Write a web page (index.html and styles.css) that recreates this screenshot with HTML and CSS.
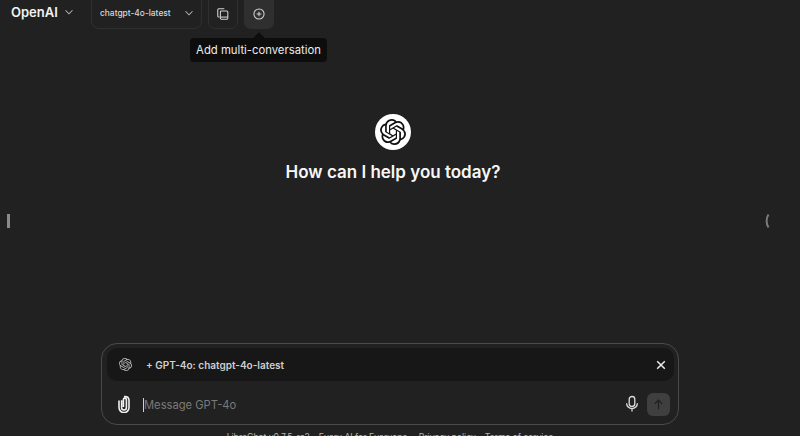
FILE: index.html
```html
<!DOCTYPE html>
<html lang="en">
<head>
<meta charset="utf-8">
<title>LibreChat</title>
<link rel="stylesheet" href="styles.css">
</head>
<body>
<svg class="defs" width="0" height="0" aria-hidden="true">
  <symbol id="openai" viewBox="0 0 24 24"><path fill="currentColor" d="M22.2819 9.8211a5.9847 5.9847 0 0 0-.5157-4.9108 6.0462 6.0462 0 0 0-6.5098-2.9A6.0651 6.0651 0 0 0 4.9807 4.1818a5.9847 5.9847 0 0 0-3.9977 2.9 6.0462 6.0462 0 0 0 .7427 7.0966 5.98 5.98 0 0 0 .511 4.9107 6.051 6.051 0 0 0 6.5146 2.9001A5.9847 5.9847 0 0 0 13.2599 24a6.0557 6.0557 0 0 0 5.7718-4.2058 5.9894 5.9894 0 0 0 3.9977-2.9001 6.0557 6.0557 0 0 0-.7475-7.0729zm-9.022 12.6081a4.4755 4.4755 0 0 1-2.8764-1.0408l.1419-.0804 4.7783-2.7582a.7948.7948 0 0 0 .3927-.6813v-6.7369l2.02 1.1686a.071.071 0 0 1 .038.052v5.5826a4.504 4.504 0 0 1-4.4945 4.4944zm-9.6607-4.1254a4.4708 4.4708 0 0 1-.5346-3.0137l.142.0852 4.783 2.7582a.7712.7712 0 0 0 .7806 0l5.8428-3.3685v2.3324a.0804.0804 0 0 1-.0332.0615L9.74 19.9502a4.4992 4.4992 0 0 1-6.1408-1.6464zM2.3408 7.8956a4.485 4.485 0 0 1 2.3655-1.9728V11.6a.7664.7664 0 0 0 .3879.6765l5.8144 3.3543-2.0201 1.1685a.0757.0757 0 0 1-.071 0l-4.8303-2.7865A4.504 4.504 0 0 1 2.3408 7.872zm16.5963 3.8558L13.1038 8.364 15.1192 7.2a.0757.0757 0 0 1 .071 0l4.8303 2.7913a4.4944 4.4944 0 0 1-.6765 8.1042v-5.6772a.79.79 0 0 0-.407-.667zm2.0107-3.0231l-.142-.0852-4.7735-2.7818a.7759.7759 0 0 0-.7854 0L9.409 9.2297V6.8974a.0662.0662 0 0 1 .0284-.0615l4.8303-2.7866a4.4992 4.4992 0 0 1 6.6802 4.66zM8.3065 12.863l-2.02-1.1638a.0804.0804 0 0 1-.038-.0567V6.0742a4.4992 4.4992 0 0 1 7.3757-3.4537l-.142.0805L8.704 5.459a.7948.7948 0 0 0-.3927.6813zm1.0976-2.3654l2.602-1.4998 2.6069 1.4998v2.9994l-2.5974 1.4997-2.6067-1.4997Z"/></symbol>
</svg>

<header class="topbar">
  <div class="brand">
    <span>OpenAI</span>
    <svg class="chev" viewBox="0 0 16 16"><path d="M4 6l4 4 4-4"/></svg>
  </div>
  <div class="model-select">
    <span>chatgpt-4o-latest</span>
    <svg class="chev" viewBox="0 0 16 16"><path d="M4 6l4 4 4-4"/></svg>
  </div>
  <button class="icon-btn outlined" aria-label="Bookmarks">
    <svg viewBox="0 0 16 16" class="icon14"><path d="M4 11.5H3.2A1.2 1.2 0 0 1 2 10.3V3.2A1.2 1.2 0 0 1 3.2 2H9.5"/><rect x="5" y="4.5" width="8.5" height="9.5" rx="1.2"/><path d="M5 11.5h8.5"/></svg>
  </button>
  <button class="icon-btn filled" aria-label="Add multi-conversation">
    <svg viewBox="0 0 16 16" class="icon14"><circle cx="8" cy="8" r="5.8"/><path d="M8 5.3v5.4M5.3 8h5.4"/></svg>
    <span class="tooltip">Add multi-conversation</span>
  </button>
</header>

<main class="hero">
  <div class="logo"><svg class="logo-mark"><use href="#openai"/></svg></div>
  <h1>How can I help you today?</h1>
</main>

<section class="composer">
  <div class="added-model">
    <div class="added-label">
      <svg class="added-mark"><use href="#openai"/></svg>
      <span>+ GPT-4o: chatgpt-4o-latest</span>
    </div>
    <svg class="close" viewBox="0 0 12 12"><path d="M2.2 2.2l7.6 7.6M9.8 2.2l-7.6 7.6"/></svg>
  </div>
  <div class="input-row">
    <svg class="clip" viewBox="0 0 18 18"><path d="M6.6 5.2v7.4a2.4 2.4 0 0 0 4.8 0V4.6a1.5 1.5 0 0 0-3 0v7.4M4 5.6v7a5 5 0 0 0 10 0V5.2a4 4 0 0 0-4-3.7H9"/></svg>
    <div class="placeholder"><i class="caret"></i>Message GPT-4o</div>
    <svg class="mic" viewBox="0 0 18 18"><rect x="6.2" y="1.5" width="5.6" height="10" rx="2.8"/><path d="M3.6 8.2a5.4 5.4 0 0 0 10.8 0M9 13.6v3"/></svg>
    <button class="send" aria-label="Send"><svg viewBox="0 0 14 14"><path d="M7 12V2.5M3 6.3l4-4 4 4"/></svg></button>
  </div>
</section>

<footer class="legal">LibreChat v0.7.5-rc2 - Every AI for Everyone. - Privacy policy - Terms of service</footer>

<i class="handle-left"></i>
<svg class="handle-right" viewBox="0 0 6 16"><path d="M4.5 1.5C2 5 2 11 4.5 14.5"/></svg>
</body>
</html>
```

FILE: styles.css
```css
* { box-sizing: border-box; }

html, body { height: 100%; }

body {
  margin: 0;
  position: relative;
  display: flex;
  flex-direction: column;
  overflow: hidden;
  background: #212121;
  color: #ececec;
  font-family: Inter, "Liberation Sans", sans-serif;
}

.defs { position: absolute; }

.topbar {
  display: flex;
  align-items: center;
  flex: none;
  height: 36px;
  margin-top: -7px;
  padding-left: 11px;
}

.brand {
  display: flex;
  align-items: center;
  gap: 4px;
  width: 80px;
  padding-top: 2px;
  font-size: 13px;
  font-weight: 600;
  color: #f2f2f2;
}

.chev {
  width: 14px;
  height: 14px;
  fill: none;
  stroke: #b4b4b4;
  stroke-width: 1.2;
}

.model-select {
  display: flex;
  align-items: center;
  justify-content: space-between;
  width: 111px;
  height: 36px;
  padding: 3px 5px 0 8px;
  margin-right: 6px;
  border: 1px solid #2f2f2f;
  border-radius: 8px;
  font-size: 8.4px;
  font-weight: 500;
  color: #d8d8d8;
}

.icon-btn {
  position: relative;
  display: flex;
  align-items: center;
  justify-content: center;
  width: 30px;
  height: 36px;
  padding: 6px 0 0;
  border: 1px solid transparent;
  border-radius: 7px;
  background: none;
  color: #d4d4d4;
  font-family: inherit;
}

.outlined {
  border-color: #2f2f2f;
  margin-right: 6px;
}

.filled { background: #2f2f2f; }

.icon14 {
  width: 14px;
  height: 14px;
  fill: none;
  stroke: currentColor;
  stroke-width: 1.2;
}

.tooltip {
  position: absolute;
  top: 44px;
  left: -55px;
  width: 137px;
  height: 24px;
  border-radius: 4px;
  background: #0d0d0d;
  color: #ececec;
  font-size: 11.3px;
  line-height: 24px;
  text-align: center;
  white-space: nowrap;
}

.tooltip::before {
  content: "";
  position: absolute;
  top: -4px;
  left: 65px;
  width: 8px;
  height: 8px;
  background: #0d0d0d;
  transform: rotate(45deg);
}

.hero {
  flex: none;
  display: flex;
  flex-direction: column;
  align-items: center;
  height: 314px;
  padding: 85px 14px 0 0;
}

.logo {
  display: flex;
  align-items: center;
  justify-content: center;
  width: 36px;
  height: 36px;
  border-radius: 50%;
  background: #fff;
  color: #111;
}

.logo-mark {
  width: 26px;
  height: 26px;
}

h1 {
  margin: 10px 0 0;
  font-size: 17px;
  line-height: 24px;
  font-weight: 600;
  color: #f7f7f7;
}

.composer {
  flex: none;
  width: 578px;
  height: 82px;
  margin-left: 101px;
  padding: 4px 4px 0 5px;
  border: 1px solid #4a4a4a;
  border-radius: 16px;
  background: #212121;
}

.added-model {
  display: flex;
  align-items: center;
  justify-content: space-between;
  height: 33px;
  padding: 0 7px 0 12px;
  border-radius: 10px;
  background: #171717;
}

.added-label {
  display: flex;
  align-items: center;
  gap: 14px;
  font-size: 10px;
  font-weight: 600;
  color: #cfcfcf;
}

.added-mark {
  width: 13px;
  height: 13px;
  color: #b8b8b8;
}

.close {
  width: 12px;
  height: 12px;
  fill: none;
  stroke: #ececec;
  stroke-width: 1.5;
}

.input-row {
  display: flex;
  align-items: center;
  height: 44px;
  padding: 2px 4px 0 2px;
}

.clip {
  width: 18px;
  height: 18px;
  margin-left: 6px;
  fill: none;
  stroke: #f0f0f0;
  stroke-width: 1.6;
}

.placeholder {
  flex: 1;
  display: flex;
  align-items: center;
  margin-left: 10px;
  padding-top: 2px;
  font-size: 11.2px;
  color: #7a7a7a;
}

.caret {
  width: 1px;
  height: 14px;
  background: #d0d0d0;
}

.mic {
  width: 18px;
  height: 18px;
  margin-right: 6px;
  fill: none;
  stroke: #dcdcdc;
  stroke-width: 1.3;
}

.send {
  display: flex;
  align-items: center;
  justify-content: center;
  width: 23px;
  height: 23px;
  padding: 0;
  border: 0;
  border-radius: 6px;
  background: #3f3f3f;
}

.send svg {
  width: 13px;
  height: 13px;
  fill: none;
  stroke: #1f1f1f;
  stroke-width: 1.3;
}

.legal {
  flex: none;
  height: 11px;
  margin: 7px 20px 0 0;
  font-size: 8.66px;
  line-height: 11px;
  text-align: center;
  color: #b4b4b4;
  white-space: nowrap;
}

.handle-left {
  position: absolute;
  top: 214px;
  left: 7px;
  width: 3px;
  height: 14px;
  background: #8a8a8a;
}

.handle-right {
  position: absolute;
  top: 213px;
  left: 764px;
  width: 6px;
  height: 16px;
  fill: none;
  stroke: #7c7c7c;
  stroke-width: 2;
}
```
